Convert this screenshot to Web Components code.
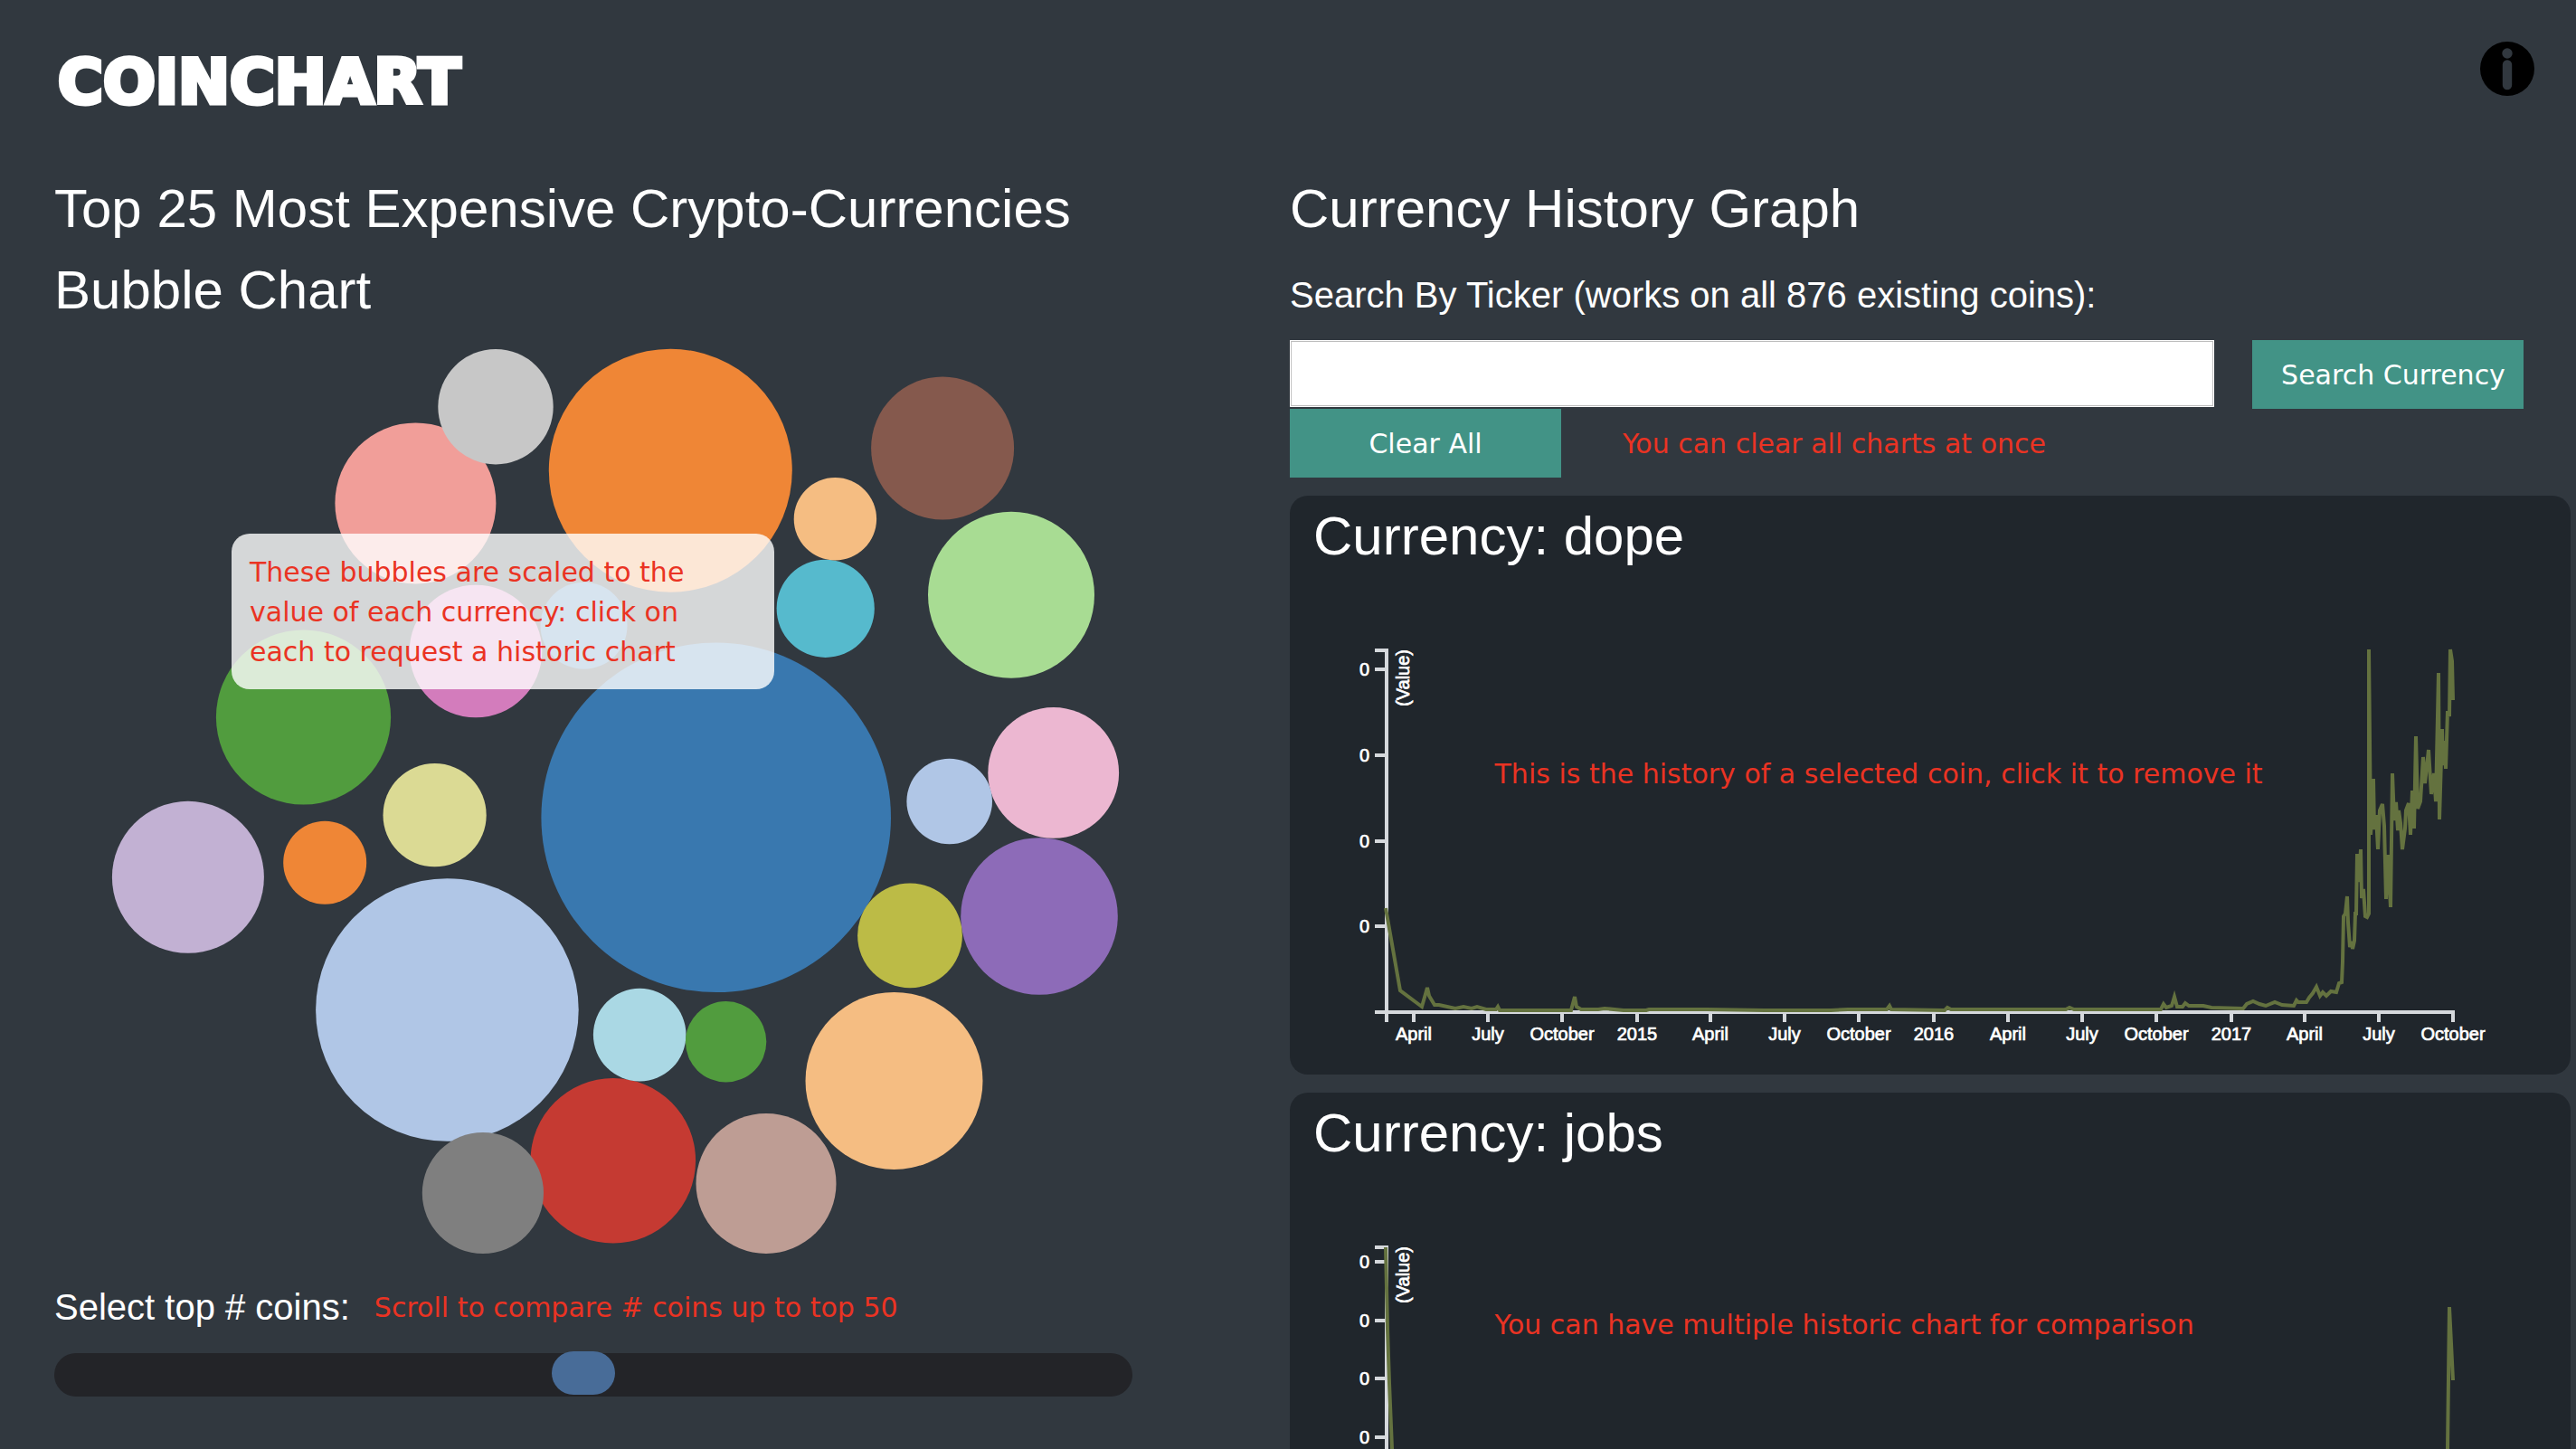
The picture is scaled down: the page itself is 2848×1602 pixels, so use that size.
<!DOCTYPE html>
<html lang="en">
<head>
<meta charset="utf-8">
<meta name="viewport" content="width=device-width, initial-scale=1">
<title>CoinChart</title>
<style>
  html, body { margin: 0; height: 100%; }
  body {
    background: #31383f;
    color: #fff;
    font-family: "Liberation Sans", Arial, sans-serif;
    overflow: hidden;
    --note: #ea3323;
    --note-font: "DejaVu Sans", Verdana, sans-serif;
    --teal: #429386;
    --panel: #20262c;
  }
</style>
</head>
<body>
<coin-app></coin-app>

<script>
const make = (host, html) => {
  const t = document.createElement('template');
  t.innerHTML = html;
  host.attachShadow({ mode: 'open' }).append(t.content.cloneNode(true));
};

customElements.define('coin-header', class extends HTMLElement {
  constructor() {
    super();
    make(this, `
      <style>
        :host { display: flex; justify-content: space-between; align-items: flex-start; height: 186px; box-sizing: border-box; padding: 46px 46px 0 64px; }
        h1 { margin: 0; font: 700 68px/90px "DejaVu Sans", sans-serif; text-transform: uppercase; -webkit-text-stroke: 5px #fff; stroke-linejoin: round; }
        button { display: block; width: 60px; height: 60px; padding: 0; border: 0; background: none; cursor: pointer; }
        svg { display: block; width: 100%; height: 100%; }
      </style>
      <h1>Coinchart</h1>
      <button type="button" aria-label="Information">
        <svg viewBox="0 0 60 60"><path fill-rule="evenodd" d="M30 0a30 30 0 1 1 0 60a30 30 0 1 1 0-60zM30 7.3a5.7 5.7 0 1 0 0 11.4a5.7 5.7 0 1 0 0-11.4zM30 20.3a5.2 5.2 0 0 0-5.2 5.2V48a5.2 5.2 0 0 0 10.4 0V25.5a5.2 5.2 0 0 0-5.2-5.2z"/></svg>
      </button>`);
  }
});

customElements.define('coin-note', class extends HTMLElement {
  constructor() {
    super();
    make(this, `
      <style>
        :host { display: block; padding-top: 2px; color: var(--note); font: 30px/44px var(--note-font); }
      </style>
      <slot></slot>`);
  }
});

const bubbles = [
  [731.7, 537.8, 193.3, '#3978af'], [434.4, 750.5, 145.3, '#b0c6e6'], [681.3, 154.2, 134.5, '#ef8636'],
  [928.5, 828.9, 98, '#f5bd82'], [275.5, 427, 96.6, '#519c3e'], [1058, 291.7, 92, '#a8dc93'],
  [617.8, 917.3, 91.3, '#c53a32'], [399.4, 190.4, 89, '#f19e99'], [1089, 647, 86.8, '#8d6bb8'],
  [147.9, 603.8, 84, '#c2b1d3'], [982.1, 129.5, 79, '#85594d'], [787, 942.4, 77.5, '#be9d94'],
  [466, 354, 73.3, '#d37cbc'], [1104.7, 488.4, 72.4, '#ecb7d1'], [473.9, 953, 67.1, '#7f7f7f'],
  [488, 83.7, 63.7, '#c7c7c7'], [946, 668.3, 57.9, '#bcbb46'], [420.6, 535.2, 57.1, '#dbda94'],
  [852.7, 306.8, 54.1, '#56bacd'], [647.2, 778.1, 51.3, '#aad8e4'], [585.5, 325.7, 48, '#3978af'],
  [989.7, 520, 47.3, '#b0c6e6'], [299.2, 587.7, 46, '#ef8636'], [863.4, 207.7, 45.7, '#f5bd82'],
  [742.6, 785.8, 44.7, '#519c3e']
];

customElements.define('bubble-chart', class extends HTMLElement {
  constructor() {
    super();
    make(this, `
      <style>
        :host { display: block; position: relative; }
        svg { display: block; width: 100%; height: auto; }
        circle { cursor: pointer; }
        .tip { position: absolute; left: 196px; top: 224px; width: 600px; box-sizing: border-box; padding: 19px 80px 19px 20px; border-radius: 20px; background: rgba(255, 255, 255, .8); }
      </style>
      <svg viewBox="0 0 1192 1049" role="img" aria-label="Bubble chart of coin values">
        ${bubbles.map(([x, y, r, c]) => `<circle cx="${x}" cy="${y}" r="${r}" fill="${c}"/>`).join('')}
      </svg>
      <div class="tip"><slot></slot></div>`);
  }
});

customElements.define('coin-slider', class extends HTMLElement {
  constructor() {
    super();
    make(this, `
      <style>
        :host { display: flex; flex-direction: column; gap: 21px; }
        .row { display: flex; align-items: center; gap: 27px; }
        label { font-size: 40px; line-height: 60px; }
        input { appearance: none; -webkit-appearance: none; display: block; width: 100%; height: 48px; margin: 0; border-radius: 24px; background: #232428; }
        input::-webkit-slider-thumb { -webkit-appearance: none; width: 70px; height: 48px; margin-top: -4px; border-radius: 24px; background: #486c98; cursor: pointer; }
      </style>
      <div class="row"><label for="count">Select top # coins:</label><slot></slot></div>
      <input id="count" type="range" min="1" max="50" value="25">`);
  }
});

customElements.define('coin-search', class extends HTMLElement {
  constructor() {
    super();
    make(this, `
      <style>
        :host { display: block; padding-right: 52px; }
        label { display: block; margin: 20px 0; font-size: 40px; line-height: 60px; }
        .row { display: flex; }
        .field { gap: 42px; align-items: flex-start; }
        .clear { gap: 68px; align-items: center; }
        input { flex: 1; min-width: 0; height: 74px; box-sizing: border-box; padding: 0 16px; border: 2px solid #fff; outline: 1px solid #bdbdbd; outline-offset: -2px; background: #fff; font: 30px "DejaVu Sans", sans-serif; }
        button { width: 300px; height: 76px; padding: 0; border: 0; background: var(--teal); color: #fff; font: 30px var(--note-font); cursor: pointer; }
        .find { padding-left: 12px; }
      </style>
      <label for="ticker">Search By Ticker (works on all 876 existing coins):</label>
      <div class="row field"><input id="ticker" type="text"><button class="find" type="button">Search Currency</button></div>
      <div class="row clear"><button type="button">Clear All</button><slot></slot></div>`);
  }
});

const months = [[30, 'April'], [112, 'July'], [194, 'October'], [277, '2015'], [358, 'April'], [440, 'July'], [522, 'October'], [605, '2016'], [687, 'April'], [769, 'July'], [851, 'October'], [934, '2017'], [1015, 'April'], [1097, 'July'], [1179, 'October']];

const series = {
  dope: {
    ticks: [21, 116, 211, 305],
    labels: months,
    line: '-1,285 15,376 39,394 45,373 47,382 53,392 58,392 76,396 85,394 94,396 100,394 110,397 121,397 123,394 125,398 204,398 208,383 210,394 215,397 234,397 241,396 262,398 287,398 290,397 354,397 418,398 491,398 510,397 553,397 556,393 558,397 617,398 620,395 624,397 751,397 755,395 760,397 856,397 859,391 862,395 868,393 871,383 874,394 880,394 883,390 887,393 903,393 912,395 947,396 951,391 958,388 965,391 972,393 982,389 990,392 1003,393 1006,387 1008,389 1017,389 1020,384 1024,379 1028,372 1032,382 1035,378 1039,382 1044,377 1050,378 1053,368 1056,367 1057,344 1058,294 1060,291 1062,272 1063,301 1065,328 1067,322 1068,330 1070,321 1071,291 1072,291 1073,225 1075,256 1077,220 1078,274 1080,264 1082,294 1084,295 1086,291 1086,-1 1088,204 1091,142 1092,198 1094,182 1096,220 1098,177 1101,170 1103,194 1105,275 1107,226 1110,284 1112,136 1114,188 1116,168 1118,199 1119,177 1121,191 1123,220 1126,197 1127,177 1130,169 1132,204 1134,155 1136,197 1138,95 1140,175 1143,167 1146,118 1148,147 1152,110 1155,159 1158,136 1160,167 1163,25 1164,187 1167,87 1168,127 1170,100 1171,131 1173,67 1175,73 1176,-1 1178,12 1179,55'
  },
  jobs: {
    ticks: [16, 81, 145, 210],
    labels: [],
    line: '-1,0 1,90 3,150 6,223 11,370 20,396 60,398 1150,398 1171,390 1173,223 1175,66 1179,147'
  }
};

customElements.define('history-card', class extends HTMLElement {
  connectedCallback() {
    if (this.shadowRoot) return;
    const coin = this.getAttribute('coin');
    const { ticks, labels, line } = series[coin];
    make(this, `
      <style>
        :host { display: block; position: relative; border-radius: 20px; background: var(--panel); cursor: pointer; }
        h3 { margin: 0; padding-left: 26px; font-weight: 400; font-size: 60px; line-height: 90px; }
        svg { display: block; width: 100%; height: auto; }
        .axis { fill: none; stroke: #d5d8dc; stroke-width: 4; }
        .line { fill: none; stroke: #64723f; stroke-width: 4; }
        text { fill: #fff; stroke: #fff; stroke-width: .7; font-size: 20px; }
        .x { text-anchor: middle; }
        .y, .unit { text-anchor: end; }
        ::slotted(coin-note) { position: absolute; left: 16%; top: var(--note-top, 50%); transform: translateY(-50%); }
      </style>
      <h3>Currency: ${coin}</h3>
      <svg viewBox="0 0 1416 550">
        <g transform="translate(107 81)">
          <path class="axis" d="M-13 0H0V400H-13M0 411V400H1179V411${months.map(([x]) => `M${x} 400V411`).join('')}${ticks.map(y => `M-13 ${y}H0`).join('')}"/>
          ${labels.map(([x, m]) => `<text class="x" x="${x}" y="431">${m}</text>`).join('')}
          ${ticks.map(y => `<text class="y" x="-19" y="${y + 7}">0</text>`).join('')}
          <text class="unit" transform="rotate(-90)" x="1" y="25">(Value)</text>
          <polyline class="line" points="${line}"/>
        </g>
      </svg>
      <slot></slot>`);
  }
});

customElements.define('coin-app', class extends HTMLElement {
  constructor() {
    super();
    make(this, `
      <style>
        :host { display: block; }
        main { display: grid; grid-template-columns: 1fr 1fr; align-items: start; }
        .top { padding: 0 172px 0 60px; }
        .history { padding: 0 6px 0 2px; }
        .cards { display: flex; flex-direction: column; gap: 20px; margin-top: 20px; }
        h2 { margin: 0; font-weight: 400; font-size: 60px; line-height: 90px; }
        .high { --note-top: 48%; }
        .low { --note-top: 40%; }
      </style>
      <coin-header></coin-header>
      <main>
        <section class="top">
          <h2>Top 25 Most Expensive Crypto-Currencies Bubble Chart</h2>
          <bubble-chart><coin-note>These bubbles are scaled to the value of each currency: click on each to request a historic chart</coin-note></bubble-chart>
          <coin-slider><coin-note>Scroll to compare # coins up to top 50</coin-note></coin-slider>
        </section>
        <section class="history">
          <h2>Currency History Graph</h2>
          <coin-search><coin-note>You can clear all charts at once</coin-note></coin-search>
          <div class="cards">
            <history-card class="high" coin="dope"><coin-note>This is the history of a selected coin, click it to remove it</coin-note></history-card>
            <history-card class="low" coin="jobs"><coin-note>You can have multiple historic chart for comparison</coin-note></history-card>
          </div>
        </section>
      </main>`);
  }
});
</script>
</body>
</html>
